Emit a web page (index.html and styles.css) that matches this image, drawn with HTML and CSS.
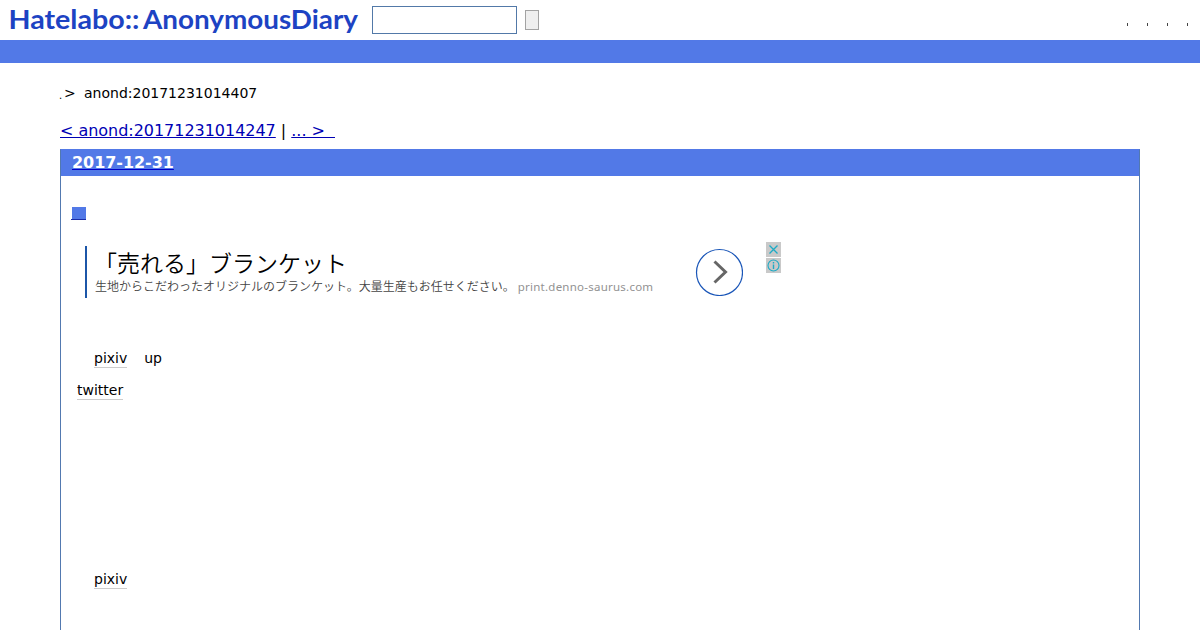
FILE: index.html
```html
<!DOCTYPE html>
<html lang="ja">
<head>
    <meta charset="UTF-8">
    <meta name="viewport" content="width=device-width, initial-scale=1.0">
    <title>anond:20171231014407</title>
    <link rel="stylesheet" href="styles.css">
</head>
<body>
    <header class="header">
        <a class="logo" href="#">
            <svg width="360" height="40" viewBox="0 0 360 40">
                <text x="8.5" y="29" textLength="131" lengthAdjust="spacingAndGlyphs">Hatelabo::</text>
                <text x="143" y="28.5" textLength="215" lengthAdjust="spacingAndGlyphs">AnonymousDiary</text>
            </svg>
        </a>
        <form class="search">
            <input type="text" class="search-word" name="word">
            <button type="button" class="search-button"></button>
        </form>
        <ul class="guide">
            <li></li>
            <li></li>
            <li></li>
            <li></li>
        </ul>
    </header>
    <div class="bar"></div>

    <main class="container">
        <p class="breadcrumb"><span class="home">.</span><span class="arrow">&gt;</span><span>anond:20171231014407</span></p>
        <p class="pager"><a href="#">&lt; anond:20171231014247</a> | <a href="#">... &gt;&nbsp;&nbsp;</a></p>

        <div class="day">
            <h2 class="day-title"><a href="#">2017-12-31</a></h2>
            <div class="section">
                <h3 class="section-title"><a href="#"><span class="sanchor"></span></a></h3>

                <div class="ad">
                    <div class="ad-text">
                        <div class="ad-title">「売れる」ブランケット</div>
                        <div class="ad-body">生地からこだわったオリジナルのブランケット。大量生産もお任せください。<span class="ad-url">print.denno-saurus.com</span></div>
                    </div>
                    <svg class="ad-arrow" width="48" height="48" viewBox="0 0 48 48">
                        <circle cx="24.5" cy="24.5" r="23" fill="none" stroke="#1a56b8" stroke-width="1.2"/>
                        <path d="M19.5 13.5 L30.5 24 L19.5 34.5" fill="none" stroke="#666" stroke-width="3"/>
                    </svg>
                    <div class="ad-buttons">
                        <svg width="15" height="15" viewBox="0 0 15 15">
                            <path d="M3.5 3.5 L11.5 11.5 M11.5 3.5 L3.5 11.5" stroke="#1cabc6" stroke-width="1.3"/>
                        </svg>
                        <svg width="15" height="15" viewBox="0 0 15 15">
                            <circle cx="7.5" cy="7.5" r="5.5" fill="none" stroke="#1cabc6" stroke-width="1.1"/>
                            <path d="M7.5 4 V5.4 M7.5 6.5 V11" stroke="#1cabc6" stroke-width="1.4"/>
                        </svg>
                    </div>
                </div>

                <p class="text indent"><a class="keyword" href="#">pixiv</a><span class="up">up</span></p>
                <p class="text"><a class="keyword" href="#">twitter</a></p>
                <p class="text indent last"><a class="keyword" href="#">pixiv</a></p>
            </div>
        </div>
    </main>
</body>
</html>
```
FILE: styles.css
```css
body {
    margin: 0;
    background-color: #fff;
    color: #000;
    font-family: "DejaVu Sans", "Noto Sans CJK JP", sans-serif;
}
p, h2, h3, ul {
    margin: 0;
    padding: 0;
}
.header {
    display: flex;
    align-items: center;
    height: 40px;
}
.logo svg {
    display: block;
}
.logo text {
    font-family: Lato, sans-serif;
    font-size: 26px;
    font-weight: 700;
    fill: #1d43c3;
}
.search {
    display: flex;
    align-items: center;
    gap: 8px;
    margin-left: 12px;
}
.search-word {
    box-sizing: border-box;
    width: 145px;
    height: 28px;
    border: 1px solid #5279a8;
    padding: 2px;
}
.search-button {
    box-sizing: border-box;
    width: 14px;
    height: 20px;
    padding: 0;
    border: 1px solid #a3a3a3;
    background-color: #efefef;
}
.guide {
    display: flex;
    gap: 19px;
    margin: 8px 12px 0 auto;
    list-style: none;
}
.guide li {
    width: 1px;
    height: 3px;
    background-color: #444;
}
.bar {
    height: 23px;
    background-color: #5279e7;
}
.container {
    margin: 0 60px;
}
.breadcrumb {
    display: flex;
    padding-top: 20px;
    font-size: 14px;
    line-height: 20px;
}
.home {
    width: 5px;
    height: 20px;
    margin-left: -1px;
    font-size: 10px;
    line-height: 25px;
}
.arrow {
    width: 20px;
}
.pager {
    margin-top: 18px;
    font-size: 16px;
    line-height: 20px;
    letter-spacing: -0.03px;
}
.pager a {
    color: #0000b4;
}
.day {
    box-sizing: border-box;
    height: 481px;
    margin-top: 8px;
    border: 1px solid #5279b0;
    border-top-color: #5279e7;
    border-bottom: none;
}
.day-title {
    padding-left: 11px;
    background-color: #5279e7;
    font-size: 16px;
    line-height: 26px;
    letter-spacing: -0.05px;
}
.day-title a {
    color: #fff;
    text-decoration-color: #0000c8;
}
.section {
    padding-left: 16px;
}
.section-title {
    height: 15px;
    margin: 31px 0 0 -6px;
    line-height: 0;
}
.section-title a {
    display: inline-block;
    height: 12px;
    padding: 0 0 0 1px;
    border-bottom: 1px solid #1a2ca8;
}
.sanchor {
    display: block;
    width: 14px;
    height: 12px;
    background-color: #5279e7;
}
.ad {
    display: flex;
    align-items: flex-start;
    margin: 20px 0 0 8px;
    font-family: "Noto Sans CJK JP", sans-serif;
    font-weight: 400;
}
.ad-text {
    box-sizing: border-box;
    width: 610px;
    height: 52px;
    margin-top: 4px;
    padding-left: 8px;
    border-left: 2px solid #1c56a8;
    white-space: nowrap;
}
.ad-title {
    margin-left: -1px;
    font-size: 23px;
    font-weight: 350;
    line-height: 32px;
}
.ad-body {
    color: #444;
    font-size: 12px;
    font-weight: 350;
    line-height: 16px;
}
.ad-url {
    margin-left: 3px;
    color: #929292;
    font-family: "Noto Sans", sans-serif;
    font-size: 11.5px;
    font-weight: 400;
    letter-spacing: 0.24px;
}
.ad-arrow {
    margin: 6px 23px 0 0;
}
.ad-buttons {
    display: flex;
    flex-direction: column;
    gap: 1px;
}
.ad-buttons svg {
    background-color: #c9c9c9;
}
.text {
    height: 32px;
    font-size: 14px;
    line-height: 16px;
}
.ad + .text {
    margin-top: 52px;
}
.indent {
    padding-left: 17px;
}
.keyword {
    display: inline-block;
    height: 17px;
    border-bottom: 1px solid #ccc;
    color: #000;
    text-decoration: none;
}
.up {
    margin-left: 17px;
}
.last {
    margin-top: 157px;
}
```
